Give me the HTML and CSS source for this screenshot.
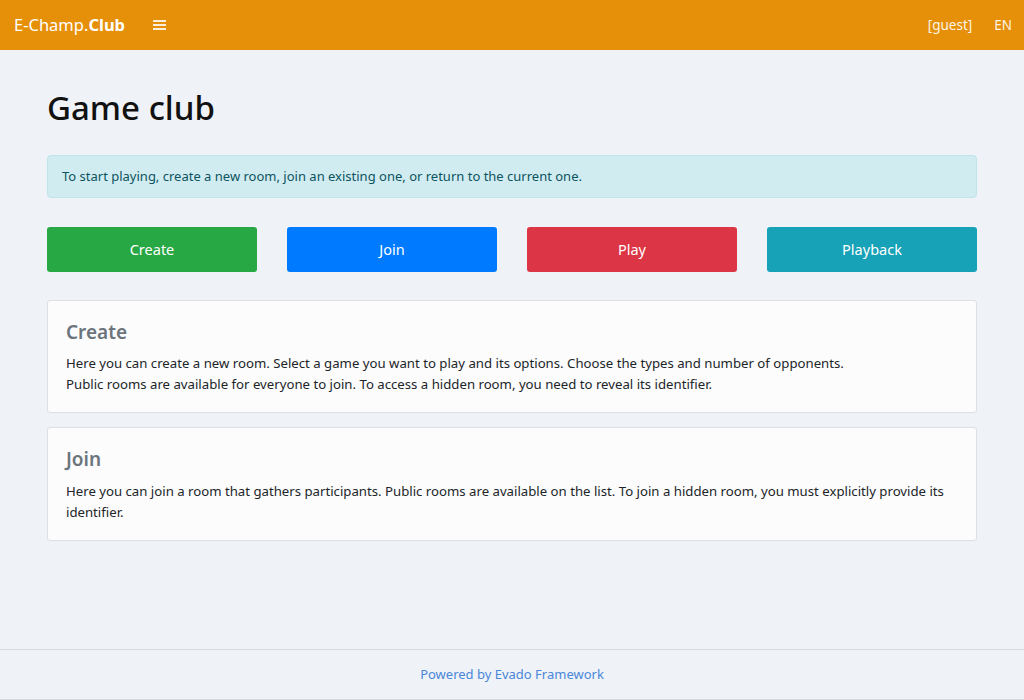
FILE: index.html
```html
<!DOCTYPE html>
<html lang="en">
<head>
<meta charset="utf-8">
<title>E-Champ.Club</title>
<link rel="stylesheet" href="styles.css">
</head>
<body>
<div class="page">
  <header class="navbar">
    <div class="nav-left">
      <a class="brand" href="#">E-Champ.<b>Club</b></a>
      <button class="toggler" aria-label="menu">
        <svg width="13" height="12" viewBox="0 0 13 12"><rect x="0" y="1" width="13" height="2" fill="#fff" opacity="0.85"/><rect x="0" y="5" width="13" height="2" fill="#fff" opacity="0.85"/><rect x="0" y="9" width="13" height="2" fill="#fff" opacity="0.85"/></svg>
      </button>
    </div>
    <div class="nav-right">
      <span class="nav-item">[guest]</span>
      <span class="nav-item">EN</span>
    </div>
  </header>
  <main class="container">
    <h1 class="title">Game club</h1>
    <div class="alert">To start playing, create a new room, join an existing one, or return to the current one.</div>
    <div class="actions">
      <a class="btn btn-green" href="#">Create</a>
      <a class="btn btn-blue" href="#">Join</a>
      <a class="btn btn-red" href="#">Play</a>
      <a class="btn btn-teal" href="#">Playback</a>
    </div>
    <section class="card">
      <h2 class="card-title">Create</h2>
      <p class="card-text">Here you can create a new room. Select a game you want to play and its options. Choose the types and number of opponents.<br>Public rooms are available for everyone to join. To access a hidden room, you need to reveal its identifier.</p>
    </section>
    <section class="card">
      <h2 class="card-title">Join</h2>
      <p class="card-text">Here you can join a room that gathers participants. Public rooms are available on the list. To join a hidden room, you must explicitly provide its identifier.</p>
    </section>
  </main>
  <footer class="footer">
    <a href="#">Powered by Evado Framework</a>
  </footer>
</div>
</body>
</html>
```
FILE: styles.css
```css
* { box-sizing: border-box; }
html, body { margin: 0; height: 100%; }
body {
  font-family: "Noto Sans", "Open Sans", sans-serif;
  font-size: 14px;
  line-height: 1.5;
  color: #212529;
  background: #eff3f8;
}
.page { min-height: 700px; display: flex; flex-direction: column; }
.navbar {
  height: 50px;
  background: #e68f09;
  display: flex;
  align-items: center;
  justify-content: space-between;
  padding: 0 12px 0 14px;
}
.nav-left { display: flex; align-items: center; }
.brand { color: #fff; text-decoration: none; font-size: 16.5px; }
.brand b { font-weight: 700; }
.toggler { background: none; border: 0; padding: 0; margin-left: 28px; display: flex; }
.nav-right { display: flex; gap: 22px; }
.nav-item { color: #fff; opacity: 0.9; font-size: 13.5px; }
.container { width: 930px; margin: 0 auto; flex: 1; }
.title { font-size: 33px; font-weight: 500; margin: 38px 0 27px; line-height: 1.2; color: #111; }
.alert {
  background: #d1ecf1;
  border: 1px solid #bee5eb;
  color: #0c5460;
  border-radius: 4px;
  padding: 10px 14px;
  font-size: 13px;
  line-height: 21px;
}
.actions { display: grid; grid-template-columns: repeat(4, 1fr); gap: 30px; margin: 29px 0 28px; }
.btn {
  display: flex; align-items: center; justify-content: center;
  height: 45px; padding-top: 2px; border-radius: 3px; color: #fff; text-decoration: none; font-size: 14.5px;
}
.btn-green { background: #28a745; }
.btn-blue { background: #007bff; }
.btn-red { background: #dc3545; }
.btn-teal { background: #17a2b8; }
.card {
  background: #fcfcfc;
  border: 1px solid #dcdfe3;
  border-radius: 3px;
  padding: 18px 18px 17px;
  margin-bottom: 14px;
}
.card-title { font-size: 19px; font-weight: 600; color: #6c757d; margin: 0 0 8px; line-height: 1.4; }
.card-text { margin: 0; font-size: 13.2px; line-height: 21px; }
.footer {
  border-top: 1px solid #d6d9dd;
  border-bottom: 1px solid #d6d9dd;
  height: 51px;
  display: flex; align-items: center; justify-content: center;
}
.footer a { color: #4a86d8; text-decoration: none; font-size: 13px; }
```
